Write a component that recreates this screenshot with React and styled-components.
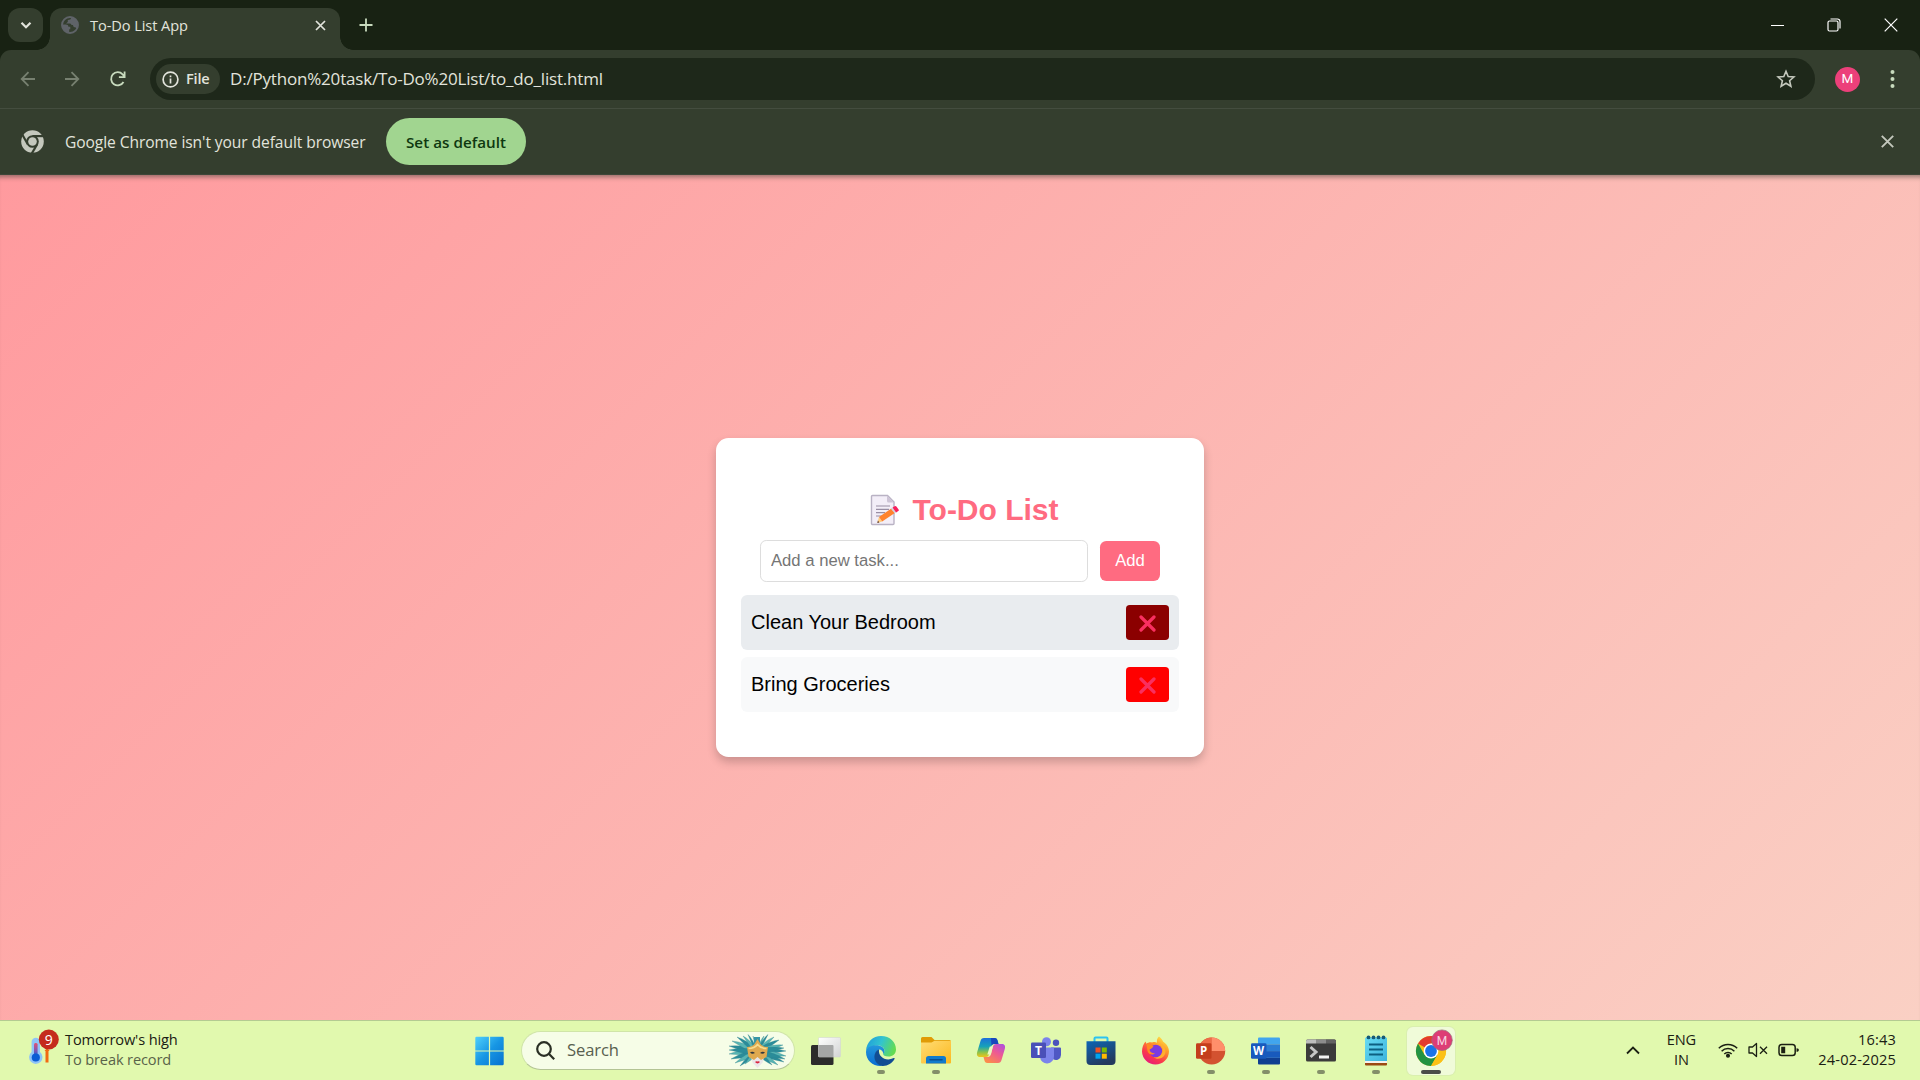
import React from "react";
import styled, { createGlobalStyle, css } from "styled-components";

const ui = `"Open Sans", "Noto Sans", sans-serif`;
const arial = `"Liberation Sans", Arial, sans-serif`;

const GlobalStyle = createGlobalStyle`
  * { box-sizing: border-box; }
  html, body { margin: 0; padding: 0; overflow: hidden; }
  svg { display: block; flex: none; }
  button, input { margin: 0; font: inherit; }
`;

const Screen = styled.div`
  width: 1920px;
  height: 1080px;
  display: flex;
  flex-direction: column;
  overflow: hidden;
  font-family: ${ui};
`;

/* ---------- browser chrome ---------- */

const Browser = styled.header`
  flex: none;
  background: #182213;
  color: #e2e4dc;
`;

const TabStrip = styled.div`
  display: flex;
  align-items: flex-start;
  height: 50px;
  padding: 8px 0 0 8px;
`;

const TabSearch = styled.button`
  display: flex;
  align-items: center;
  justify-content: center;
  width: 35px;
  height: 34px;
  margin-right: 7px;
  padding: 0;
  border: 0;
  border-radius: 12px;
  background: #343e2e;
`;

const Tab = styled.div`
  position: relative;
  display: flex;
  align-items: center;
  width: 290px;
  height: 42px;
  padding: 0 12px 8px 11px;
  border-radius: 12px 12px 0 0;
  background: #343e2e;

  &::before,
  &::after {
    content: "";
    position: absolute;
    bottom: 0;
    width: 13px;
    height: 13px;
  }
  &::before {
    left: -13px;
    background: radial-gradient(circle at 0 0, transparent 12.5px, #343e2e 13px);
  }
  &::after {
    right: -13px;
    background: radial-gradient(circle at 100% 0, transparent 12.5px, #343e2e 13px);
  }
`;

const TabTitle = styled.span`
  flex: 1;
  margin-left: 11px;
  font-size: 14.6px;
  line-height: 20px;
  letter-spacing: -0.08px;
  white-space: nowrap;
`;

const NewTab = styled.div`
  margin: 10px 0 0 19px;
`;

const WindowControls = styled.div`
  display: flex;
  align-items: center;
  gap: 43px;
  height: 34px;
  margin-left: auto;
  padding-right: 22px;
`;

const Toolbar = styled.div`
  display: flex;
  align-items: center;
  height: 59px;
  padding: 0 18px;
  border-bottom: 1px solid #444d3f;
  border-radius: 11px 11px 0 0;
  background: #343e2e;
`;

const NavButtons = styled.div`
  display: flex;
  gap: 25px;
  width: 132px;
`;

const AddressBar = styled.div`
  display: flex;
  align-items: center;
  width: 1665px;
  height: 42px;
  padding: 0 19px 0 6px;
  border-radius: 21px;
  background: #1e281a;
`;

const FileChip = styled.span`
  display: flex;
  align-items: center;
  gap: 7px;
  width: 64px;
  height: 30px;
  padding-left: 6px;
  border-radius: 15px;
  background: #343e2e;
  font-size: 14.6px;
  font-weight: 600;
  letter-spacing: -0.2px;
`;

const ChipLabel = styled.span`
  padding-bottom: 2px;
`;

const Url = styled.span`
  flex: 1;
  margin: 0 0 0 10px;
  font-size: 17px;
  line-height: 24px;
  letter-spacing: -0.19px;
`;

const Avatar = styled.span`
  display: flex;
  align-items: center;
  justify-content: center;
  width: 25px;
  height: 25px;
  margin: 0 30px 0 20px;
  border-radius: 50%;
  background: #ec407a;
  color: #fff;
  font: 400 13.5px/1 Roboto, sans-serif;
`;

const InfoBar = styled.div`
  display: flex;
  align-items: center;
  height: 66px;
  padding: 0 26px 0 21px;
  border-bottom: 1px solid #3f4639;
  background: #343e2e;
`;

const InfoText = styled.span`
  width: 321px;
  margin-left: 21px;
  padding-top: 1px;
  font-size: 15.6px;
  letter-spacing: -0.09px;
  white-space: nowrap;
`;

const DefaultButton = styled.button`
  width: 140px;
  height: 47px;
  margin-right: auto;
  padding: 1px 0 0;
  border: 0;
  border-radius: 24px;
  background: #a1d590;
  color: #0e380f;
  font-size: 15.2px;
  font-weight: 600;
  letter-spacing: 0.03px;
  white-space: nowrap;
`;

/* ---------- to-do page ---------- */

const Page = styled.main`
  flex: 1;
  display: flex;
  align-items: center;
  justify-content: center;
  background: linear-gradient(135deg, #ff9a9e, #fad0c4);
  box-shadow: inset 0 6px 5px -4px rgba(40, 50, 40, 0.5);
`;

const Card = styled.section`
  display: flex;
  flex-direction: column;
  align-items: center;
  width: 488px;
  height: 319px;
  padding: 50px 25px 0;
  border-radius: 12.5px;
  background: #fff;
  box-shadow: 0 5px 10px rgba(0, 0, 0, 0.2);
  font-family: ${arial};
`;

const Title = styled.h2`
  display: flex;
  align-items: center;
  gap: 13px;
  height: 42px;
  margin: 0 0 10px;
  padding: 1px 0 0 9px;
  color: #ff6b81;
  font-size: 30px;
  line-height: 42px;
`;

const TaskForm = styled.form`
  display: flex;
  align-items: center;
  gap: 12px;
  margin-bottom: 13px;
`;

const TaskInput = styled.input`
  width: 328px;
  height: 42px;
  padding: 0 10px;
  border: 1px solid #ddd;
  border-radius: 6.25px;
  outline: 0;
  font-size: 16.67px;
  &::placeholder { color: #757575; }
`;

const AddButton = styled.button`
  width: 60px;
  height: 40px;
  padding: 0;
  border: 0;
  border-radius: 6.25px;
  background: #ff6b81;
  color: #fff;
  font-size: 16.67px;
`;

const TaskList = styled.ul`
  display: flex;
  flex-direction: column;
  gap: 7px;
  width: 438px;
  margin: 0;
  padding: 0;
  list-style: none;
`;

const Task = styled.li`
  display: flex;
  align-items: center;
  justify-content: space-between;
  height: 55px;
  padding: 0 10px;
  border-radius: 6.25px;
  background: ${(p) => (p.$active ? "#e9ecef" : "#f8f9fa")};
  color: #000;
  font-size: 20px;
`;

const DeleteButton = styled.button`
  display: flex;
  align-items: center;
  justify-content: center;
  width: 43px;
  height: 35px;
  padding: 1px 0 0;
  border: 0;
  border-radius: 3.75px;
  background: ${(p) => (p.$active ? "#8b0000" : "#ff0000")};
`;

/* ---------- taskbar ---------- */

const Taskbar = styled.footer`
  flex: none;
  display: flex;
  align-items: center;
  height: 60px;
  border-top: 1px solid #b4cb92;
  background: #e1f9ae;
  color: #1b2013;
  font-size: 14.6px;
  line-height: 20px;
  letter-spacing: -0.13px;
`;

const Weather = styled.div`
  display: flex;
  align-items: center;
  gap: 5px;
  width: 462px;
  padding: 0 0 0 28px;

  svg { margin-bottom: 6px; }
`;

const Lines = styled.div`
  display: flex;
  flex-direction: column;
  padding-bottom: 3px;
  white-space: nowrap;
  text-align: ${(p) => p.$align || "left"};
  ${(p) => p.$width && css`width: ${p.$width}px;`}
  ${(p) => p.$tracking && css`letter-spacing: ${p.$tracking}px;`}
`;

const Muted = styled.span`
  color: #59634a;
`;

const TaskButton = styled.div`
  display: flex;
  align-items: center;
  justify-content: center;
  position: relative;
  width: 55px;
  height: 59px;
`;

const ActiveTile = styled.div`
  display: flex;
  align-items: center;
  justify-content: center;
  width: 48px;
  height: 48px;
  border-radius: 6px;
  background: #f0fbd9;
  box-shadow: 0 0 0 1px rgba(215, 235, 175, 0.7);

  svg { margin: 0 0 4px 6px; }
`;

const Indicator = styled.span`
  position: absolute;
  bottom: 6px;
  left: 50%;
  width: ${(p) => (p.$active ? 20 : 8)}px;
  height: 4px;
  border-radius: 2px;
  background: ${(p) => (p.$active ? "#4b4c49" : "#838f69")};
  transform: translateX(-50%);
`;

const SearchBox = styled.div`
  display: flex;
  align-items: center;
  width: 274px;
  height: 39px;
  margin: 0 3px 0 4px;
  padding: 0 6px 0 14px;
  border: 1px solid #d0e5a8;
  border-bottom-color: #b3c494;
  border-radius: 20px;
  background: #f6fde7;
  color: #58604f;
  font-size: 16.6px;
`;

const SearchLabel = styled.span`
  flex: 1;
  margin-left: 12px;
  padding-bottom: 1px;
`;

const Tray = styled.div`
  display: flex;
  align-items: center;
  gap: 11px;
  margin-left: auto;
  padding-right: 24px;
`;

const TrayIcons = styled.div`
  display: flex;
  align-items: center;
  gap: 10px;
  margin: -2px 8px 0 -4px;
`;

/* ---------- icons ---------- */

const Stroke = ({ w, h = w, d, color = "#e2e4dc", sw = 2, children }) => (
  <svg width={w} height={h} viewBox={`0 0 ${w} ${h}`} fill="none" stroke={color} strokeWidth={sw}>
    {d && <path d={d} />}
    {children}
  </svg>
);

const Globe = () => (
  <svg width="18" height="18" viewBox="0 0 18 18">
    <circle cx="9" cy="9" r="8" fill="#343e2e" stroke="#5f6368" strokeWidth="1.9" />
    <path fill="#5f6368" d="M10.800 1 9.300 3.400 6.800 4v1.900L5 7.600h4.300l1.400 1.400h1.200l.8 2 2.100.4.8 1.700C17.500 11 17.600 6.500 15 3.500A8 8 0 0 0 10.800 1z" />
    <path fill="#5f6368" d="M1 8.600h3.800c1.600 0 2.600.8 2.600 2.200h1.900v2.400H8.200v3.700C4 16.700 1 13 1 8.600z" />
  </svg>
);

const ChromeMono = () => (
  <svg width="23" height="23" viewBox="0 0 23 23">
    <circle cx="11.500" cy="11.500" r="11.300" fill="#c4c8bd" />
    <circle cx="11.500" cy="11.500" r="6.300" fill="#343e2e" />
    <g stroke="#343e2e" strokeWidth="2.200" fill="none">
      <path d="M11.500 6.100H23" />
      <path d="M6.800 14.200 1.100 4.300" />
      <path d="M16.200 14.200 10.500 24" />
    </g>
    <circle cx="11.500" cy="11.500" r="4.300" fill="#c4c8bd" />
  </svg>
);

const Memo = () => (
  <svg width="29" height="32" viewBox="0 0 29 32">
    <path d="M2.500 1.500h15l6.500 6.500v21.500a1 1 0 0 1-1 1H2.500a1 1 0 0 1-1-1v-27a1 1 0 0 1 1-1z" fill="#f3eef8" stroke="#b9b2c4" strokeWidth="1.400" />
    <path d="M17 1.500 24 8.500h-5.500A1.500 1.500 0 0 1 17 7z" fill="#cdc4d6" />
    <path d="M6 12h14M6 15.300h13M6 18.600h9M6 22h6" stroke="#998ea4" strokeWidth="1.200" />
    <path d="m9 23 3.200 4.500-4.900 1.600z" fill="#ffce7c" />
    <path d="m7.900 26.400 1.500 2-2.100.7z" fill="#5a3a38" />
    <path d="M9 23 21.300 14.500l3.500 4.600-12.600 8.400z" fill="#ff822d" />
    <path d="m21 14.700 2-1.400 3.500 4.700-1.800 1.300z" fill="#d3d3e0" />
    <path d="m22.600 13.600 2-1.400a1.300 1.300 0 0 1 1.800.3l2.200 2.900a1.300 1.300 0 0 1-.3 1.700l-2.200 1.500z" fill="#f8215c" />
  </svg>
);

const Cross = () => (
  <svg width="17" height="17" viewBox="0 0 17 17">
    <path d="m2 2 13 13M15 2 2 15" stroke="#f92f60" strokeWidth="3.200" strokeLinecap="round" />
  </svg>
);

const Thermometer = () => (
  <svg width="32" height="38" viewBox="0 0 32 38">
    <defs>
      <linearGradient id="th" x2="0" y2="1">
        <stop stopColor="#e4506e" />
        <stop offset=".55" stopColor="#7d55b5" />
        <stop offset="1" stopColor="#0b62d0" />
      </linearGradient>
    </defs>
    <path d="M3.600 13a4.200 4.200 0 0 1 8.400 0v10a6.700 6.700 0 1 1-8.400 0z" fill="#8fc4f7" />
    <rect x="6" y="14" width="3.600" height="14" rx="1.500" fill="url(#th)" />
    <circle cx="7.800" cy="28.500" r="4.100" fill="#0a5cd5" />
    <path d="M16.500 22 19 19l2.600 3H20.500v11.500h-3V22z" fill="#f26a12" />
    <circle cx="20.800" cy="10.500" r="10" fill="#c42b1c" />
    <text x="20.800" y="15.700" textAnchor="middle" fontFamily={ui} fontSize="14" fill="#fff">9</text>
  </svg>
);

const Windows = () => (
  <svg width="30" height="30" viewBox="0 0 30 30">
    <defs>
      <linearGradient id="win" x2="1" y2="1">
        <stop stopColor="#4fd0fb" />
        <stop offset=".5" stopColor="#1796e4" />
        <stop offset="1" stopColor="#0671cf" />
      </linearGradient>
    </defs>
    <path fill="url(#win)" d="M1.500.8h12.400v13.600H.3V2A1.200 1.200 0 0 1 1.500.8zm13.600 0h12.400A1.200 1.200 0 0 1 28.700 2v12.400H15.100zM.3 15.600h13.600v13.600H1.500A1.200 1.200 0 0 1 .3 28zm14.800 0h13.600V28a1.200 1.200 0 0 1-1.200 1.200H15.100z" />
  </svg>
);

const feathers = [
  [1, 12, 0], [4, 7, 1], [9, 3, 0], [15, 2, 1], [20, 0.5, 0], [25, 2, 1],
  [36, 2, 1], [40, 0.5, 0], [46, 3, 1], [51, 6, 0], [55, 11, 1], [58, 17, 0],
  [58, 22, 1], [56, 28, 0], [50, 31, 1], [44, 31, 0], [1, 20, 1], [3, 25, 0],
  [7, 29, 1], [12, 32, 0], [17, 30, 1], [1, 16, 0], [56, 14, 0], [57, 25, 0],
];

const Mask = () => (
  <svg width="60" height="34" viewBox="0 0 60 34">
    {feathers.map(([x, y, tone]) => {
      const mx = (x + 29) / 2;
      const my = (y + 18) / 2;
      return (
        <path
          key={`${x}-${y}`}
          d={`M29 16 Q${mx} ${my - 4.5} ${x} ${y} Q${mx} ${my + 2.5} 29 21z`}
          fill={tone ? "#58b5b3" : "#2a8c99"}
          stroke="#2b7f8c"
          strokeWidth=".3"
        />
      );
    })}
    <path d="M26 3h6v8h-6z" fill="#3595a6" />
    <path d="M22 20h15l-2.500 8.500-5 5.500-5-5.500z" fill="#ebe6e8" />
    <path d="M19 13q5 0 7.500-3l3-5 3 5q2.500 3 7.500 3l-1.500 10-5.500 3-3.500-3-3.500 3-5.500-3z" fill="#dfa94f" />
    <path d="M20.500 14.500q6 0 9-4 3 4 9 4" fill="none" stroke="#f7dc8e" strokeWidth="1.600" />
    <path d="M22 18.500q2.200-1.800 5 .4-2.800 1.800-5-.4zm10 .4q2.800-2.200 5-.4-2.200 2.200-5 .4z" fill="#30383f" />
    <path d="M27 28q1.300-1.200 2.500-.5 1.300-.7 2.500.5-2.500 2.800-5 0z" fill="#d9233c" />
  </svg>
);

const TaskView = () => (
  <svg width="30" height="28" viewBox="0 0 30 28">
    <defs>
      <linearGradient id="tv" x2="1" y2="1">
        <stop stopColor="#fff" />
        <stop offset="1" stopColor="#d2d3d4" />
      </linearGradient>
    </defs>
    <rect y="8" width="22.500" height="20" rx="1.500" fill="#2c2c2b" />
    <rect x="7.500" y=".5" width="22" height="19.500" rx="1" fill="url(#tv)" stroke="#d4d6d2" strokeWidth=".6" />
    <path d="M7.500 8h14a1 1 0 0 1 1 1v11h-15z" fill="#a5a6a6" />
  </svg>
);

const Edge = () => (
  <svg width="32" height="32" viewBox="0 0 32 32">
    <defs>
      <linearGradient id="e1" x1="0" y1=".2" x2="1" y2=".5">
        <stop stopColor="#1f9ddb" />
        <stop offset=".5" stopColor="#32c4cf" />
        <stop offset="1" stopColor="#63dc50" />
      </linearGradient>
      <linearGradient id="e2" x2="0" y2="1">
        <stop stopColor="#2397dc" />
        <stop offset="1" stopColor="#0a6cd0" />
      </linearGradient>
    </defs>
    <path d="M1 15.500C1.600 7 8 1 16 1c9 0 15 6 15 13.500 0 4.500-3.500 7-7.500 7-3.700 0-5.300-1.300-5.300-2.500 0-.9 1.200-1.400 1.200-3.400 0-3-3-5-7-5C7 10.600 3 13 1 15.500z" fill="url(#e1)" />
    <path d="M1 17c0-4.500 5-6.700 10-6.700 5.200 0 8.500 2.400 8.400 5.700 0 1.500-1.200 2.500-1.200 3 0-3-2-4.500-4-4.500-3 1-5 5-3.700 9.500C11.800 28 15 31 19 30.700 9 32.500 1 26 1 17z" fill="url(#e2)" />
    <path d="M14 14.500c-7 2.500-6 15 3.500 16.400 5 .2 9.800-2.800 12-7 .4-.8-.2-1.200-.8-.8C21 27 13 22 14 14.500z" fill="#124d93" />
  </svg>
);

const Folder = () => (
  <svg width="30" height="27" viewBox="0 0 30 27">
    <defs>
      <linearGradient id="fo" x2="1" y2="1">
        <stop stopColor="#ffdc75" />
        <stop offset="1" stopColor="#fcb91f" />
      </linearGradient>
    </defs>
    <path d="M0 1.500A1.500 1.500 0 0 1 1.500 0h9l3 3H28.500A1.500 1.500 0 0 1 30 4.500V8H0z" fill="#e09b06" />
    <path d="M0 5.500h10.500l3-1.700H30V25.500a1 1 0 0 1-1 1H1a1 1 0 0 1-1-1z" fill="url(#fo)" />
    <path d="M5 26.500v-5a2.500 2.500 0 0 1 2.500-2.500h15a2.500 2.500 0 0 1 2.500 2.500v5z" fill="#127bcc" />
    <path d="M9 22.700h12" stroke="#0a4f92" strokeWidth="1.500" strokeLinecap="round" />
  </svg>
);

const Copilot = () => (
  <svg width="30" height="27" viewBox="0 0 30 27">
    <defs>
      <linearGradient id="c1" x2="0" y2="1">
        <stop stopColor="#1c6fdb" />
        <stop offset=".45" stopColor="#16a2b8" />
        <stop offset=".75" stopColor="#8bc34b" />
        <stop offset="1" stopColor="#f0c419" />
      </linearGradient>
      <linearGradient id="c2" x1="1" x2=".3" y2="1">
        <stop stopColor="#a94fe6" />
        <stop offset=".5" stopColor="#ee5a92" />
        <stop offset="1" stopColor="#fb8c4c" />
      </linearGradient>
    </defs>
    <path d="M8 1h10.500c2 0 2.700 1.300 3.200 3l.8 3h-4c-2 0-3 1-3.500 3L13 17.500c-.5 1.700-1.500 2.500-3 2.500H4C1 20 .5 17.500 1.200 15L4.500 4C5 2 6 1 8 1z" fill="url(#c1)" />
    <path d="M15 1h3.500c2 0 2.700 1.300 3.200 3l.8 3h-4c-1.500 0-2.300.5-3 1.700z" fill="#1747bd" />
    <path d="M22 26H11.500c-2 0-2.700-1.300-3.200-3l-.8-3h4c2 0 3-1 3.500-3L17 9.500C17.500 7.800 18.500 7 20 7h6c3 0 3.500 2.500 2.800 5L25.500 23c-.5 2-1.500 3-3.500 3z" fill="url(#c2)" />
    <path d="M13.800 9.500h3L14.800 17.500h-3.500z" fill="#eaf8c2" />
  </svg>
);

const Teams = () => (
  <svg width="30" height="27" viewBox="0 0 30 27">
    <circle cx="25" cy="5.800" r="3.200" fill="#4b53bc" />
    <path d="M20 10.500h9a1 1 0 0 1 1 1V18a5 5 0 0 1-8 4z" fill="#4f58c4" />
    <circle cx="15.500" cy="4.700" r="4.500" fill="#7b83eb" />
    <path d="M9 10.500h13a1 1 0 0 1 1 1V19a7 7 0 0 1-14 1z" fill="#7b83eb" />
    <rect y="5.500" width="15" height="15.500" rx="1.200" fill="#4a50b8" />
    <text x="7.500" y="17.700" textAnchor="middle" fontFamily={ui} fontWeight="700" fontSize="12" fill="#fff">T</text>
  </svg>
);

const Store = () => (
  <svg width="30" height="30" viewBox="0 0 30 30">
    <defs>
      <linearGradient id="st" x2=".5" y2="1">
        <stop stopColor="#0d65b5" />
        <stop offset="1" stopColor="#243a5e" />
      </linearGradient>
    </defs>
    <path d="M8.500 6.500V2.500a1 1 0 0 1 1-1h11a1 1 0 0 1 1 1v4" fill="none" stroke="#2bc3f1" strokeWidth="2" />
    <path d="M.5 5.200h29V25a4 4 0 0 1-4 4h-21a4 4 0 0 1-4-4z" fill="url(#st)" />
    <path d="M9.500 11.500h5v5h-5z" fill="#f25022" />
    <path d="M15.800 11.500h5v5h-5z" fill="#7fba00" />
    <path d="M9.500 17.700h5v5h-5z" fill="#00a4ef" />
    <path d="M15.800 17.700h5v5h-5z" fill="#ffb900" />
  </svg>
);

const Firefox = () => (
  <svg width="29" height="29" viewBox="0 0 29 29">
    <defs>
      <linearGradient id="ff" x1=".85" y1="0" x2=".25" y2="1">
        <stop stopColor="#fff04a" />
        <stop offset=".35" stopColor="#ff9a2a" />
        <stop offset=".7" stopColor="#fb3a4a" />
        <stop offset="1" stopColor="#e5197e" />
      </linearGradient>
    </defs>
    <path d="M18 .5c2 1.500 3.500 3.500 4 5 3.500 2.200 6 6 6 10A13.500 13.500 0 0 1 14.500 28.500 13.500 13.500 0 0 1 1 15.500C1 11 2.500 8 4.500 5.500l1 2.300C7 6.500 9 6 11 6.500c2-.6 4-.5 5 .2C15.500 4.500 16.300 2 18 .5z" fill="url(#ff)" />
    <circle cx="14.800" cy="15" r="6.300" fill="#7a3ae0" />
    <path d="M5.500 8c3-.5 5.500.7 7 2.700-1.600 1-1.800 2.300-4 2.600 0 2.500 2.500 4.500 5.500 3.700C12 20 7.500 18.500 6.500 15z" fill="#ff8a22" />
    <path d="M16 7c5 2 7 6 5 10-1.500 3.500-5 5-8.500 4.200C17 24.500 24 22 24.500 16 24.800 11 21 7 16 7z" fill="#ffb02e" />
  </svg>
);

const OfficeBadge = ({ letter, fill, y }) => (
  <>
    <rect x="0" y={y} width="15.500" height="15.500" rx="1.300" fill={fill} />
    <text x="7.600" y={y + 12} textAnchor="middle" fontFamily={ui} fontWeight="700" fontSize="11.500" fill="#fff">
      {letter}
    </text>
  </>
);

const PowerPoint = () => (
  <svg width="30" height="28" viewBox="0 0 30 28">
    <circle cx="15.700" cy="14" r="13.500" fill="#d35230" />
    <path d="M15.700.5A13.500 13.500 0 0 0 2.200 14h13.500z" fill="#ed6c47" />
    <path d="M15.700.5A13.500 13.500 0 0 1 29.200 14H15.700z" fill="#ff8f6b" />
    <OfficeBadge letter="P" fill="#c43e1c" y={6.2} />
  </svg>
);

const Word = () => (
  <svg width="30" height="28" viewBox="0 0 30 28">
    <path d="M7 1.500A1 1 0 0 1 8 .5h20a1 1 0 0 1 1 1V7.300H7z" fill="#41a5ee" />
    <path d="M7 7.300h22v6.800H7z" fill="#2b7cd3" />
    <path d="M7 14.100h22v6.800H7z" fill="#185abd" />
    <path d="M7 20.900h22v5.600a1 1 0 0 1-1 1H8a1 1 0 0 1-1-1z" fill="#103f91" />
    <OfficeBadge letter="W" fill="#185abd" y={6.2} />
  </svg>
);

const Terminal = () => (
  <svg width="30" height="23" viewBox="0 0 30 23">
    <rect y=".5" width="30" height="22" rx="1.500" fill="#3b3b3b" />
    <path d="M0 4.500V2A1.500 1.500 0 0 1 1.500.5H10v4z" fill="#bdbdbd" />
    <path d="M10 .5h10v4H10z" fill="#8c8c8c" />
    <path d="M20 .5h8.500A1.500 1.500 0 0 1 30 2v2.500H20z" fill="#626262" />
    <path d="m4.500 8 5.500 5-5.500 5" fill="none" stroke="#c6c6c6" strokeWidth="3" />
    <path d="M13 16.500h10v3H13z" fill="#f4f4f4" />
  </svg>
);

const Notepad = () => (
  <svg width="22" height="31" viewBox="0 0 22 31">
    <defs>
      <linearGradient id="np" x2="1" y2="1">
        <stop stopColor="#68dcf3" />
        <stop offset="1" stopColor="#3db4dd" />
      </linearGradient>
    </defs>
    <path d="M0 26h22v3.500a1 1 0 0 1-1 1H1a1 1 0 0 1-1-1z" fill="#9b4a13" />
    <path d="M0 25h22v3H0z" fill="#f5f1ec" />
    <path d="M0 3.500a1 1 0 0 1 1-1h20a1 1 0 0 1 1 1V26H0z" fill="url(#np)" />
    <path d="M4 9.500h14M4 14.500h14M4 19.500h14" stroke="#0d6081" strokeWidth="1.900" />
    {[3.5, 8.5, 13.5, 18.5].map((x) => (
      <circle key={x} cx={x} cy="2.400" r="1.900" fill="#155a77" />
    ))}
  </svg>
);

const Chrome = () => (
  <svg width="38" height="40" viewBox="0 0 38 40">
    <circle cx="16" cy="22" r="15" fill="#fbc116" />
    <path d="M16 22 3 14.500A15 15 0 0 1 29 14.500H16z" fill="#e33b2e" />
    <path d="M3 14.500A15 15 0 0 0 16 37l6.500-11.250L16 22 9.500 25.750z" fill="#229342" />
    <path d="M16 14.500H29A15 15 0 0 1 16 37l6.500-11.250z" fill="#fbc116" />
    <circle cx="16" cy="22" r="7.400" fill="#fff" />
    <circle cx="16" cy="22" r="5.900" fill="#1a73e8" />
    <circle cx="27" cy="11.200" r="10.300" fill="#dd3d75" stroke="#95707a" strokeWidth=".7" />
    <text x="27" y="15.500" textAnchor="middle" fontFamily="Roboto, sans-serif" fontSize="12" fill="#f8d5e1">M</text>
  </svg>
);

const Wifi = () => (
  <Stroke w={20} h={16} color="#1b2013" sw={1.500}>
    <path d="M.8 6.200a13 13 0 0 1 18.400 0M3.600 9.200a9 9 0 0 1 12.800 0M6.300 12a5.200 5.200 0 0 1 7.400 0" />
    <circle cx="10" cy="13.800" r="1.300" fill="#1b2013" />
  </Stroke>
);

const Speaker = () => (
  <Stroke w={20} h={16} color="#1b2013" sw={1.300}>
    <path d="M8.500 1.500v13L4.500 11H1V5h3.500z" strokeLinejoin="round" />
    <path d="m12 4.800 7 7M19 4.800l-7 7" />
  </Stroke>
);

const Battery = () => (
  <Stroke w={21} h={14} color="#1b2013" sw={1.500}>
    <rect x="1" y="1.500" width="16.200" height="11" rx="2.800" />
    <path d="M3.200 3.700h4v6.600h-4z" fill="#1b2013" stroke="none" />
    <path d="M18.500 5.200c1.700 0 2.300.8 2.300 1.800s-.6 1.800-2.300 1.800z" fill="#1b2013" stroke="none" />
  </Stroke>
);

const apps = [
  { id: "view", Icon: TaskView },
  { id: "edge", Icon: Edge, open: true },
  { id: "files", Icon: Folder, open: true },
  { id: "copilot", Icon: Copilot },
  { id: "teams", Icon: Teams },
  { id: "store", Icon: Store },
  { id: "firefox", Icon: Firefox },
  { id: "powerpoint", Icon: PowerPoint, open: true },
  { id: "word", Icon: Word, open: true },
  { id: "terminal", Icon: Terminal, open: true },
  { id: "notepad", Icon: Notepad, open: true },
];

const tasks = [
  { text: "Clean Your Bedroom", active: true },
  { text: "Bring Groceries", active: false },
];

export default function App() {
  return (
    <Screen>
      <GlobalStyle />
      <Browser>
        <TabStrip>
          <TabSearch>
            <Stroke w={12} h={9} d="m1.500 1.800 4.500 4.500 4.500-4.500" sw={2.200} />
          </TabSearch>
          <Tab>
            <Globe />
            <TabTitle>To-Do List App</TabTitle>
            <Stroke w={15} d="m3 3 9 9M12 3l-9 9" sw={1.700} />
          </Tab>
          <NewTab>
            <Stroke w={14} d="M7 .5v13M.5 7h13" sw={1.800} color="#c8dbbe" />
          </NewTab>
          <WindowControls>
            <Stroke w={13} d="M0 6.500h13" sw={1} color="#fff" />
            <Stroke w={14} sw={1.200} color="#fff">
              <rect x="1" y="3" width="10" height="10" rx="1.500" />
              <path d="M3.500 1H10.500A2.500 2.500 0 0 1 13 3.500V10.500" />
            </Stroke>
            <Stroke w={14} d="m.7.700 12.600 12.600M13.300.7.700 13.300" sw={1.200} color="#fff" />
          </WindowControls>
        </TabStrip>
        <Toolbar>
          <NavButtons>
            <Stroke w={20} d="M17 10H4M10.500 3.200 3.700 10l6.800 6.800" sw={1.800} color="#778070" />
            <Stroke w={20} d="M2 10h13M8.500 3.200l6.800 6.800-6.800 6.800" sw={1.800} color="#778070" />
            <Stroke w={20} d="M15.500 13A6.600 6.600 0 1 1 14.600 5.300L16.500 7.500M16.600 2.500v5.600h-5.700" sw={1.800} color="#c8dbbe" />
          </NavButtons>
          <AddressBar>
            <FileChip>
              <Stroke w={17} sw={1.700}>
                <circle cx="8.500" cy="8.500" r="7.400" />
                <path d="M8.500 7.500v5M8.500 4.500v1.800" />
              </Stroke>
              <ChipLabel>File</ChipLabel>
            </FileChip>
            <Url>D:/Python%20task/To-Do%20List/to_do_list.html</Url>
            <Stroke w={20} sw={1.600} color="#c4c8bd">
              <path d="m10 2.300 2.200 5.200 5.700.5-4.300 3.700 1.300 5.600L10 14.300l-4.900 3 1.300-5.600L2.100 8l5.700-.5z" />
            </Stroke>
          </AddressBar>
          <Avatar>M</Avatar>
          <svg width="5" height="20" viewBox="0 0 5 20" fill="#c8dbbe">
            <circle cx="2.500" cy="3" r="2" />
            <circle cx="2.500" cy="10" r="2" />
            <circle cx="2.500" cy="17" r="2" />
          </svg>
        </Toolbar>
        <InfoBar>
          <ChromeMono />
          <InfoText>Google Chrome isn't your default browser</InfoText>
          <DefaultButton>Set as default</DefaultButton>
          <Stroke w={13} d="m.8.800 11.400 11.400M12.200.8.800 12.200" sw={1.900} color="#c4c8bd" />
        </InfoBar>
      </Browser>

      <Page>
        <Card>
          <Title>
            <Memo />
            To-Do List
          </Title>
          <TaskForm>
            <TaskInput placeholder="Add a new task..." />
            <AddButton type="button">Add</AddButton>
          </TaskForm>
          <TaskList>
            {tasks.map((t) => (
              <Task key={t.text} $active={t.active}>
                <span>{t.text}</span>
                <DeleteButton $active={t.active}>
                  <Cross />
                </DeleteButton>
              </Task>
            ))}
          </TaskList>
        </Card>
      </Page>

      <Taskbar>
        <Weather>
          <Thermometer />
          <Lines>
            <span>Tomorrow's high</span>
            <Muted>To break record</Muted>
          </Lines>
        </Weather>
        <TaskButton>
          <Windows />
        </TaskButton>
        <SearchBox>
          <Stroke w={19} color="#2a2f24" sw={2.200}>
            <circle cx="8" cy="8" r="6.800" />
            <path d="m12.800 12.800 5.400 5.400" />
          </Stroke>
          <SearchLabel>Search</SearchLabel>
          <Mask />
        </SearchBox>
        {apps.map(({ id, Icon, open }) => (
          <TaskButton key={id}>
            <Icon />
            {open && <Indicator />}
          </TaskButton>
        ))}
        <TaskButton>
          <ActiveTile>
            <Chrome />
          </ActiveTile>
          <Indicator $active />
        </TaskButton>
        <Tray>
          <Stroke w={14} h={9} d="m1 7.500 6-6 6 6" color="#1b2013" sw={1.800} />
          <Lines $align="center" $width={60}>
            <span>ENG</span>
            <span>IN</span>
          </Lines>
          <TrayIcons>
            <Wifi />
            <Speaker />
            <Battery />
          </TrayIcons>
          <Lines $align="right" $tracking={0.15}>
            <span>16:43</span>
            <span>24-02-2025</span>
          </Lines>
        </Tray>
      </Taskbar>
    </Screen>
  );
}
